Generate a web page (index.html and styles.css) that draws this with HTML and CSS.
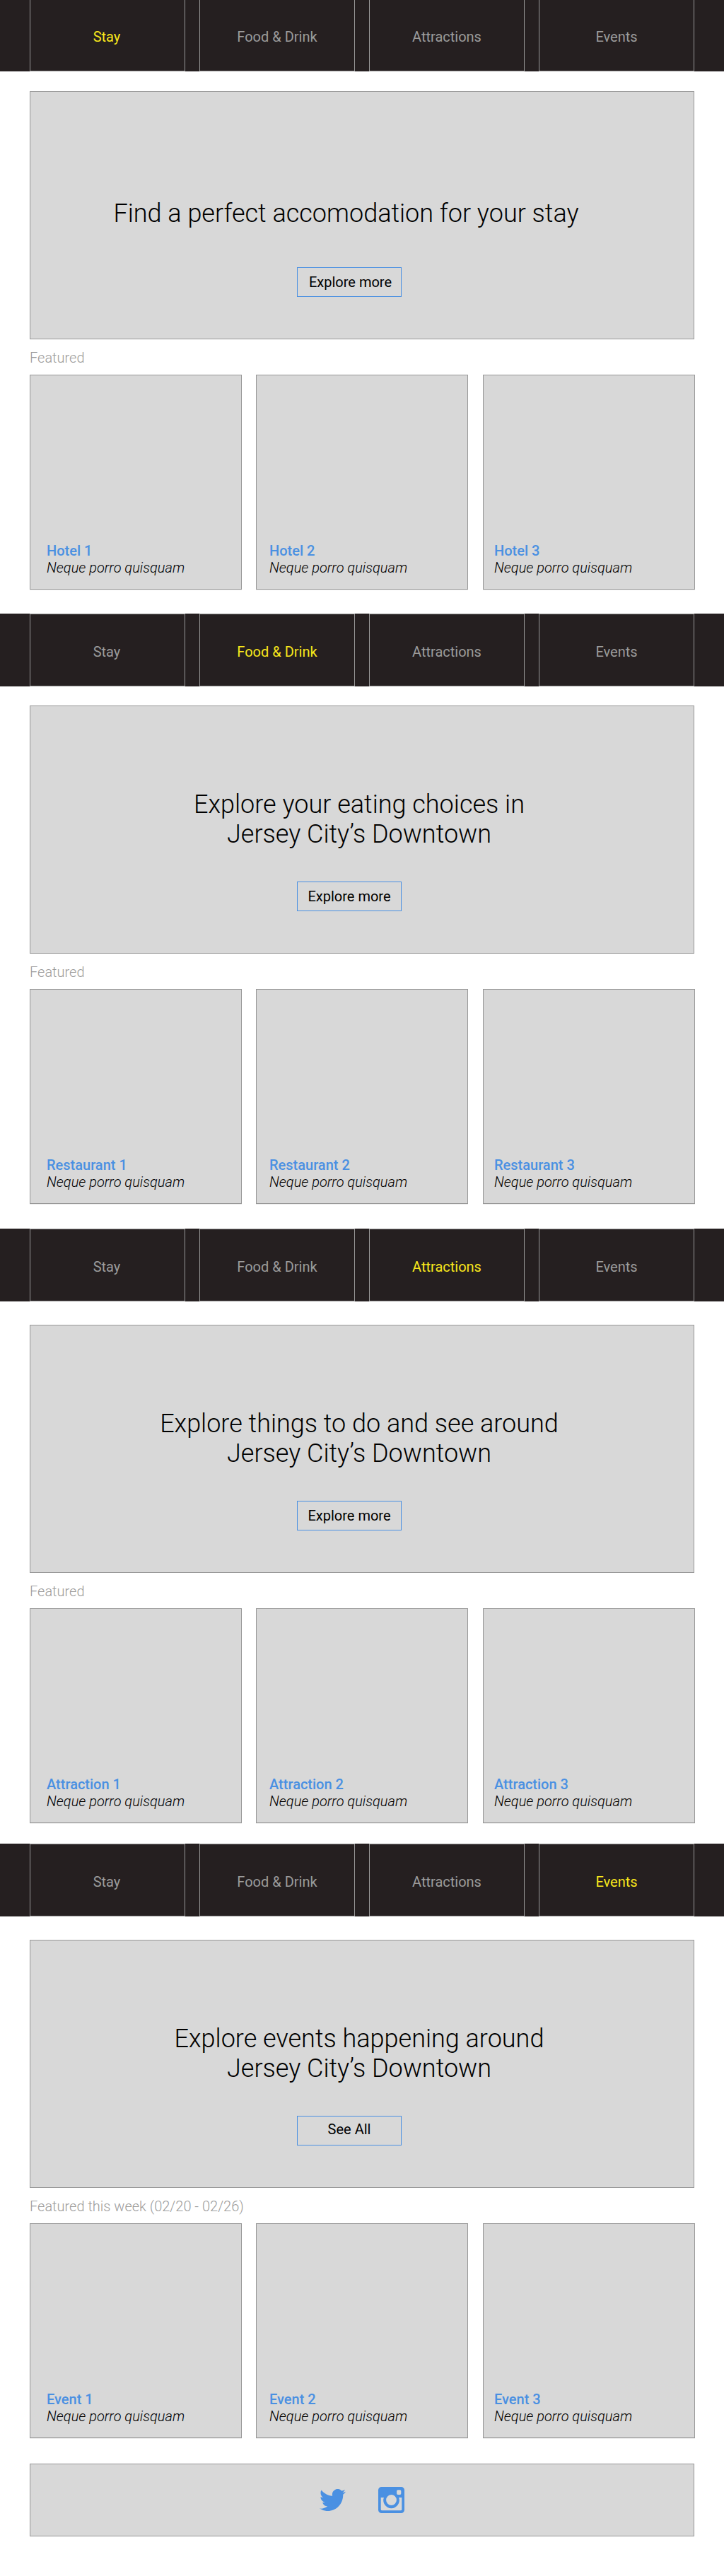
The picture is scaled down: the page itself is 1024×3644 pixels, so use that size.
FILE: index.html
```
<!DOCTYPE html>
<html lang="en">
<head>
<meta charset="utf-8">
<title>Jersey City Downtown</title>
<link rel="stylesheet" href="styles.css">
</head>
<body>
<section class="section section-stay">
  <nav class="tabs tabs-first">
    <a class="tab active">Stay</a><a class="tab">Food &amp; Drink</a><a class="tab">Attractions</a><a class="tab">Events</a>
  </nav>
  <div class="hero hero-single">
    <h1 class="hero-title">Find a perfect accomodation for your stay</h1>
    <a class="button">Explore more</a>
  </div>
  <h2 class="label">Featured</h2>
  <div class="cards">
    <article class="card"><h3 class="card-title">Hotel 1</h3><p class="card-text">Neque porro quisquam</p></article>
    <article class="card"><h3 class="card-title">Hotel 2</h3><p class="card-text">Neque porro quisquam</p></article>
    <article class="card"><h3 class="card-title">Hotel 3</h3><p class="card-text">Neque porro quisquam</p></article>
  </div>
</section>
<section class="section section-food">
  <nav class="tabs">
    <a class="tab">Stay</a><a class="tab active">Food &amp; Drink</a><a class="tab">Attractions</a><a class="tab">Events</a>
  </nav>
  <div class="hero">
    <h1 class="hero-title">Explore your eating choices in<br>Jersey City’s Downtown</h1>
    <a class="button">Explore more</a>
  </div>
  <h2 class="label">Featured</h2>
  <div class="cards">
    <article class="card"><h3 class="card-title">Restaurant 1</h3><p class="card-text">Neque porro quisquam</p></article>
    <article class="card"><h3 class="card-title">Restaurant 2</h3><p class="card-text">Neque porro quisquam</p></article>
    <article class="card"><h3 class="card-title">Restaurant 3</h3><p class="card-text">Neque porro quisquam</p></article>
  </div>
</section>
<section class="section section-attractions">
  <nav class="tabs">
    <a class="tab">Stay</a><a class="tab">Food &amp; Drink</a><a class="tab active">Attractions</a><a class="tab">Events</a>
  </nav>
  <div class="hero">
    <h1 class="hero-title">Explore things to do and see around<br>Jersey City’s Downtown</h1>
    <a class="button">Explore more</a>
  </div>
  <h2 class="label">Featured</h2>
  <div class="cards">
    <article class="card"><h3 class="card-title">Attraction 1</h3><p class="card-text">Neque porro quisquam</p></article>
    <article class="card"><h3 class="card-title">Attraction 2</h3><p class="card-text">Neque porro quisquam</p></article>
    <article class="card"><h3 class="card-title">Attraction 3</h3><p class="card-text">Neque porro quisquam</p></article>
  </div>
</section>
<section class="section section-events">
  <nav class="tabs">
    <a class="tab">Stay</a><a class="tab">Food &amp; Drink</a><a class="tab">Attractions</a><a class="tab active">Events</a>
  </nav>
  <div class="hero">
    <h1 class="hero-title">Explore events happening around<br>Jersey City’s Downtown</h1>
    <a class="button">See All</a>
  </div>
  <h2 class="label">Featured this week (02/20 - 02/26)</h2>
  <div class="cards">
    <article class="card"><h3 class="card-title">Event 1</h3><p class="card-text">Neque porro quisquam</p></article>
    <article class="card"><h3 class="card-title">Event 2</h3><p class="card-text">Neque porro quisquam</p></article>
    <article class="card"><h3 class="card-title">Event 3</h3><p class="card-text">Neque porro quisquam</p></article>
  </div>
</section>
<footer class="footer">
  <svg class="icon-twitter" viewBox="0 2.2 24 19.5" preserveAspectRatio="none" aria-label="Twitter"><path d="M23.953 4.57a10 10 0 01-2.825.775 4.958 4.958 0 002.163-2.723c-.951.555-2.005.959-3.127 1.184a4.92 4.92 0 00-8.384 4.482C7.69 8.095 4.067 6.13 1.64 3.162a4.822 4.822 0 00-.666 2.475c0 1.71.87 3.213 2.188 4.096a4.904 4.904 0 01-2.228-.616v.06a4.923 4.923 0 003.946 4.827 4.996 4.996 0 01-2.212.085 4.936 4.936 0 004.604 3.417 9.867 9.867 0 01-6.102 2.105c-.39 0-.779-.023-1.17-.067a13.995 13.995 0 007.557 2.209c9.053 0 13.998-7.496 13.998-13.985 0-.21 0-.42-.015-.63A9.935 9.935 0 0024 4.59z"/></svg>
  <svg class="icon-instagram" viewBox="0 0 37 37" aria-label="Instagram"><path fill-rule="evenodd" d="M4.500 0h28A4.500 4.500 0 0 1 37 4.500v28a4.500 4.500 0 0 1-4.500 4.500h-28A4.500 4.500 0 0 1 0 32.500v-28A4.500 4.500 0 0 1 4.500 0zM27.700 4.200a1.600 1.600 0 0 0-1.600 1.600v3.500a1.600 1.600 0 0 0 1.600 1.600h3a1.600 1.600 0 0 0 1.600-1.600V5.800a1.600 1.600 0 0 0-1.600-1.600zM3.700 15v16.800a1.500 1.500 0 0 0 1.500 1.500h26.600a1.500 1.500 0 0 0 1.500-1.500V15h-4.200a11.300 11.300 0 1 1-21.200 0zM18.500 11.100a7.400 7.400 0 1 0 0 14.800 7.400 7.400 0 0 0 0-14.800z"/></svg>
</footer>
</body>
</html>
```
FILE: styles.css
```
* { box-sizing: border-box; }
body {
  margin: 0;
  min-height: 3644px;
  background: #fff;
  color: #000;
  font-family: Roboto, "Liberation Sans", sans-serif;
}
h1, h2, h3, p { margin: 0; }

.section { display: flex; flex-direction: column; }
.section-stay { height: 868px; }
.section-food { height: 870px; }
.section-attractions { height: 870px; }
.section-events { height: 877px; }

.tabs {
  display: grid;
  grid-template-columns: repeat(4, 220px);
  gap: 20px;
  height: 103px;
  padding: 0 42px;
  background: #251f20;
}
.tab {
  border: 1px solid #979797;
  padding-top: 41px;
  color: #9b9b9b;
  font-size: 20px;
  line-height: 24px;
  text-align: center;
}
.tab:first-child { padding-right: 2px; }
.tab.active { color: #f8e71c; }
.tabs-first { height: 101px; }
.tabs-first .tab { border-top: 0; padding-top: 40px; }

.hero {
  display: flex;
  flex-direction: column;
  align-items: center;
  justify-content: flex-end;
  gap: 46px;
  width: 940px;
  height: 351px;
  margin: 33px 0 0 42px;
  padding-bottom: 59px;
  border: 1px solid #979797;
  background: #d8d8d8;
}
.section-food .hero { margin-top: 27px; }
.section-stay .hero { margin-top: 28px; }
.hero-single { gap: 55px; }
.hero-title {
  padding-right: 8px;
  font-size: 36px;
  font-weight: 300;
  line-height: 42px;
  text-align: center;
}
.hero-single .hero-title { padding-right: 45px; }
.button {
  width: 148px;
  height: 42px;
  margin-right: 36px;
  border: 1px solid #4a90e2;
  font-size: 20px;
  line-height: 40px;
  text-align: center;
}
.hero-single .button { padding-left: 3px; }
.section-events .button { line-height: 37px; }

.label {
  height: 50px;
  padding: 14px 0 0 42px;
  color: #9b9b9b;
  font-size: 20px;
  font-weight: 300;
  line-height: 24px;
}
.cards {
  display: grid;
  grid-template-columns: 300px 301px 300px;
  column-gap: 20px;
  padding-left: 42px;
}
.card {
  width: 300px;
  height: 304px;
  padding: 236px 0 0 23px;
  border: 1px solid #979797;
  background: #d8d8d8;
  box-shadow: 0 1px 0 #ececec;
  font-size: 20px;
  line-height: 24px;
}
.card:nth-child(2) { padding-left: 18px; }
.card:nth-child(3) { padding-left: 15px; }
.card-title { color: #4a90e2; font-size: 20px; font-weight: 500; }
.card-text { font-weight: 300; font-style: italic; }

.footer {
  display: flex;
  align-items: center;
  justify-content: center;
  gap: 46px;
  width: 940px;
  height: 103px;
  margin-left: 42px;
  border: 1px solid #979797;
  background: #d8d8d8;
  fill: #4a90e2;
}
.icon-twitter { width: 37px; height: 31px; }
.icon-instagram { width: 37px; height: 37px; }
```
